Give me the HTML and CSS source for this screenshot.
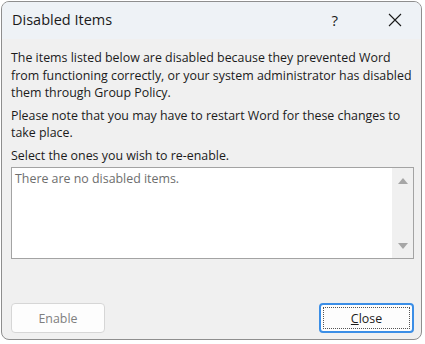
FILE: index.html
```html
<!DOCTYPE html>
<html>
<head>
<meta charset="utf-8">
<link rel="stylesheet" href="styles.css">
</head>
<body>
<div class="window">
  <div class="titlebar">
    <span class="title">Disabled Items</span>
    <div class="controls">
      <span class="help">?</span>
      <svg class="close-x" width="14" height="14" viewBox="0 0 14 14"><path d="M1 1 L13 13 M13 1 L1 13" stroke="#1a1a1a" stroke-width="1.1" fill="none"/></svg>
    </div>
  </div>
  <div class="content">
    <p class="para">The items listed below are disabled because they prevented Word<br>from functioning correctly, or your system administrator has disabled<br>them through Group Policy.</p>
    <p class="para">Please note that you may have to restart Word for these changes to<br>take place.</p>
    <p class="para">Select the ones you wish to re-enable.</p>
    <div class="listbox">
      <div class="list-text">There are no disabled items.</div>
      <div class="scrollbar">
        <svg width="10" height="7" viewBox="0 0 10 7"><path d="M0 7 L5 1 L10 7 Z" fill="#a6a6a6"/></svg>
        <svg width="10" height="7" viewBox="0 0 10 7"><path d="M0 0 L5 6 L10 0 Z" fill="#a6a6a6"/></svg>
      </div>
    </div>
    <div class="buttons">
      <button class="btn btn-disabled">Enable</button>
      <button class="btn btn-default"><span class="focus"><u>C</u>lose</span></button>
    </div>
  </div>
</div>
</body>
</html>
```

FILE: styles.css
```css
html, body {
  margin: 0;
  padding: 0;
  background: #ffffff;
}
body {
  font-family: "Open Sans", "Noto Sans", sans-serif;
  color: #1b1b1b;
}
.window {
  margin: 1px 0 0 1px;
  width: 421px;
  height: 339px;
  box-sizing: border-box;
  border: 1px solid #8e8e8e;
  border-radius: 8px;
  overflow: hidden;
  background: #f0f0f0;
  display: flex;
  flex-direction: column;
}
.titlebar {
  height: 37px;
  flex: none;
  background: #eef2f6;
  display: flex;
  align-items: center;
  justify-content: space-between;
  padding: 0 0 2px 10px;
  box-sizing: border-box;
}
.title {
  font-size: 14.5px;
  color: #1a1a1a;
}
.controls {
  display: flex;
  align-items: center;
}
.help {
  font-size: 15px;
  color: #1a1a1a;
  margin-right: 50px;
}
.close-x {
  margin-right: 19px;
}
.content {
  flex: 1;
  display: flex;
  flex-direction: column;
  padding: 10px 7px 6px 9px;
}
.para {
  margin: 0 0 5px 0;
  font-size: 12.4px;
  line-height: 17.5px;
  white-space: nowrap;
}
.para:last-of-type {
  margin-bottom: 3px;
}
.listbox {
  height: 92px;
  box-sizing: border-box;
  border: 1px solid #a3a3a3;
  background: #ffffff;
  display: flex;
  justify-content: space-between;
}
.list-text {
  font-size: 12.4px;
  color: #6e6e6e;
  padding: 2px 0 0 3px;
  line-height: 17px;
}
.scrollbar {
  width: 21px;
  background: #f0f0f0;
  display: flex;
  flex-direction: column;
  justify-content: space-between;
  align-items: center;
  padding: 9px 0 8px 0;
}
.buttons {
  margin-top: auto;
  display: flex;
  justify-content: space-between;
  align-items: center;
}
.btn {
  font-family: "Open Sans", "Noto Sans", sans-serif;
  font-size: 12.4px;
  height: 30px;
  box-sizing: border-box;
  border-radius: 4px;
  background: #fdfdfd;
  padding: 0;
}
.btn-disabled {
  width: 94px;
  border: 1px solid #d6d6d6;
  color: #7f7f7f;
}
.btn-default {
  width: 95px;
  border: 2px solid #3b8ee6;
  color: #1b1b1b;
  padding: 2px;
}
.focus {
  display: flex;
  align-items: center;
  justify-content: center;
  height: 100%;
  box-sizing: border-box;
  border: 1px dotted #555555;
}
```
